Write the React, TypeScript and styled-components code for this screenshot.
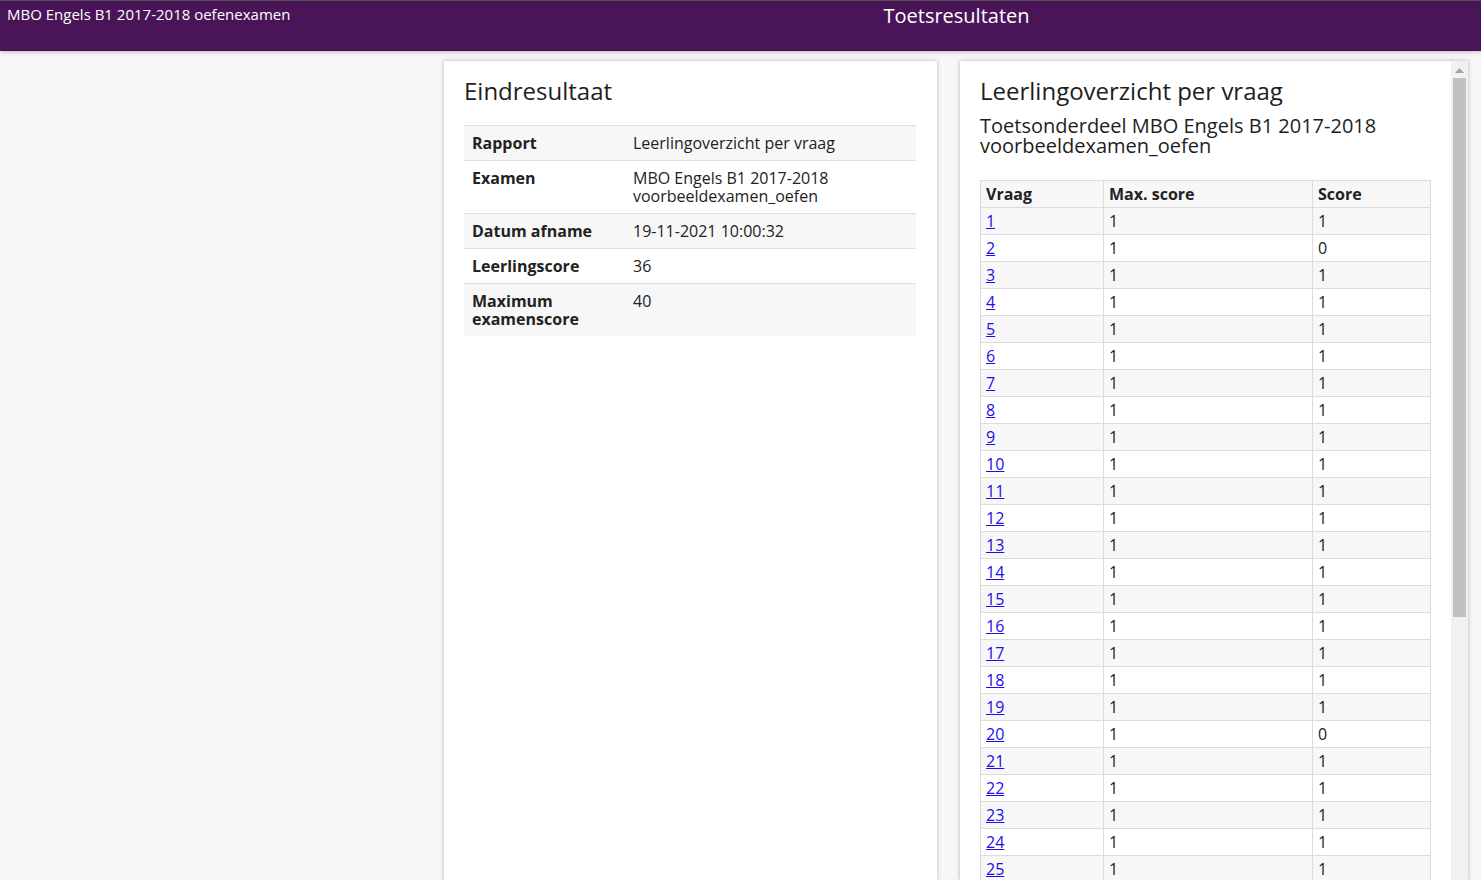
import React from "react";
import styled, { createGlobalStyle } from "styled-components";

const Global = createGlobalStyle`
  html, body { margin: 0; padding: 0; height: 100%; overflow: hidden; }
  body {
    font-family: "Open Sans", "Liberation Sans", sans-serif;
    background: #f7f7f7;
    color: #222;
  }
  #root { height: 100%; }
`;

const Page = styled.div`
  height: 100vh;
  display: flex;
  flex-direction: column;
`;

const Header = styled.header`
  flex: 0 0 auto;
  height: 50px;
  border-top: 1px solid #505050;
  background: #4a1558;
  color: #fff;
  display: grid;
  grid-template-columns: 432px 1fr;
  box-shadow: 0 1px 4px rgba(0, 0, 0, 0.25);
  position: relative;
  z-index: 2;
`;

const ExamName = styled.div`
  font-size: 15px;
  line-height: 20px;
  padding: 3px 0 0 7px;
`;

const PageTitle = styled.h1`
  margin: 0;
  font-size: 20px;
  font-weight: 400;
  line-height: 26px;
  text-align: center;
  padding-top: 2px;
`;

const Main = styled.main`
  flex: 1 1 auto;
  min-height: 0;
  display: flex;
  gap: 23px;
  padding: 10px 13px 0 444px;
`;

const Card = styled.section`
  background: #fff;
  box-shadow: 0 0 4px rgba(0, 0, 0, 0.28);
  padding: 15px 21px 20px 20px;
  box-sizing: border-box;
  width: 493px;
`;

const ScrollCard = styled.section`
  background: #fff;
  box-shadow: 0 0 4px rgba(0, 0, 0, 0.28);
  box-sizing: border-box;
  width: 508px;
  display: flex;
  overflow: hidden;
`;

const ScrollArea = styled.div`
  flex: 1 1 auto;
  min-width: 0;
  padding: 15px 20px 20px 20px;
  overflow: hidden;
`;

const ScrollBar = styled.div`
  flex: 0 0 17px;
  background: #f1f1f1;
  display: flex;
  flex-direction: column;
  align-items: center;
`;

const ScrollArrow = styled.div`
  height: 16px;
  width: 13px;
  display: flex;
  align-items: center;
  justify-content: center;
  padding-top: 1px;
`;

const ScrollThumb = styled.div`
  width: 13px;
  height: 539px;
  background: #c1c1c1;
`;

const CardTitle = styled.h2`
  margin: 0 0 20px 0;
  font-size: 24px;
  font-weight: 400;
  line-height: 29px;
  color: #1e1e1e;
`;

const SubTitle = styled.h3`
  margin: -9px 0 24px 0;
  font-size: 20px;
  font-weight: 400;
  line-height: 20px;
  color: #1e1e1e;
`;

const InfoTable = styled.table`
  width: 100%;
  border-collapse: collapse;
  font-size: 16px;
  line-height: 18px;
`;

const InfoRow = styled.tr`
  border-top: 1px solid #dedede;
  &:nth-child(odd) { background: #f7f7f7; }
`;

const InfoLabel = styled.th`
  width: 145px;
  text-align: left;
  font-weight: 700;
  padding: 8px 8px;
  vertical-align: top;
`;

const InfoValue = styled.td`
  padding: 8px 8px;
  vertical-align: top;
`;

const ScoreTable = styled.table`
  width: 451px;
  border-collapse: collapse;
  font-size: 16px;
  line-height: 18px;
  border: 1px solid #dcdcdc;
`;

const HeadCell = styled.th<{ $w: number }>`
  width: ${(p) => p.$w}px;
  text-align: left;
  font-weight: 700;
  padding: 4px 5px;
  border: 1px solid #dcdcdc;
  background: #f7f7f7;
`;

const ScoreRow = styled.tr`
  &:nth-child(odd) { background: #f7f7f7; }
`;

const Cell = styled.td`
  padding: 4px 5px;
  border: 1px solid #dcdcdc;
`;

const QLink = styled.a`
  color: #1a0dee;
  text-decoration: underline;
`;

const info: [string, string][] = [
  ["Rapport", "Leerlingoverzicht per vraag"],
  ["Examen", "MBO Engels B1 2017-2018 voorbeeldexamen_oefen"],
  ["Datum afname", "19-11-2021 10:00:32"],
  ["Leerlingscore", "36"],
  ["Maximum examenscore", "40"],
];

const zeros = new Set([2, 20, 28, 33]);
const questions = Array.from({ length: 40 }, (_, i) => ({
  n: i + 1,
  max: 1,
  score: zeros.has(i + 1) ? 0 : 1,
}));

export default function App() {
  return (
    <Page>
      <Global />
      <Header>
        <ExamName>MBO Engels B1 2017-2018 oefenexamen</ExamName>
        <PageTitle>Toetsresultaten</PageTitle>
      </Header>
      <Main>
        <Card>
          <CardTitle>Eindresultaat</CardTitle>
          <InfoTable>
            <tbody>
              {info.map(([k, v]) => (
                <InfoRow key={k}>
                  <InfoLabel>{k}</InfoLabel>
                  <InfoValue>{v}</InfoValue>
                </InfoRow>
              ))}
            </tbody>
          </InfoTable>
        </Card>
        <ScrollCard>
          <ScrollArea>
            <CardTitle>Leerlingoverzicht per vraag</CardTitle>
            <SubTitle>Toetsonderdeel MBO Engels B1 2017-2018 voorbeeldexamen_oefen</SubTitle>
            <ScoreTable>
              <thead>
                <tr>
                  <HeadCell $w={112}>Vraag</HeadCell>
                  <HeadCell $w={198}>Max. score</HeadCell>
                  <HeadCell $w={107}>Score</HeadCell>
                </tr>
              </thead>
              <tbody>
                {questions.map((q) => (
                  <ScoreRow key={q.n}>
                    <Cell>
                      <QLink href="#">{q.n}</QLink>
                    </Cell>
                    <Cell>{q.max}</Cell>
                    <Cell>{q.score}</Cell>
                  </ScoreRow>
                ))}
              </tbody>
            </ScoreTable>
          </ScrollArea>
          <ScrollBar>
            <ScrollArrow>
              <svg width="9" height="5" viewBox="0 0 9 5">
                <path d="M0 5 L4.5 0 L9 5 Z" fill="#a3a3a3" />
              </svg>
            </ScrollArrow>
            <ScrollThumb />
          </ScrollBar>
        </ScrollCard>
      </Main>
    </Page>
  );
}
